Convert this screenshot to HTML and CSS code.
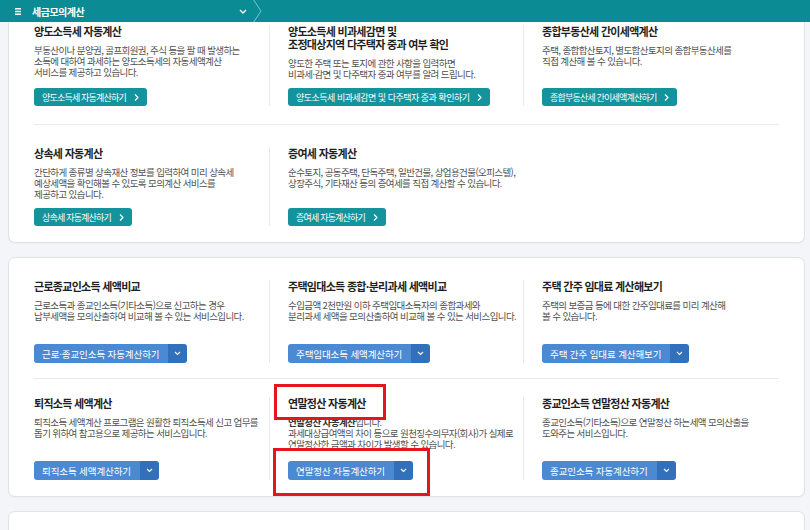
FILE: index.html
```html
<!DOCTYPE html>
<html lang="ko">
<head>
    <meta charset="UTF-8">
    <meta name="viewport" content="width=device-width, initial-scale=1.0">
    <title>세금모의계산</title>
    <link rel="stylesheet" href="styles.css">
</head>
<body>
    <header class="topbar">
        <div class="menu">
            <svg class="hamburger" width="6" height="7" viewBox="0 0 6 7"><path d="M0 .75h6M0 3.5h6M0 6.25h6" stroke="#fff" stroke-width="1.3"/></svg>
            <span class="menu-title">세금모의계산</span>
            <svg class="menu-caret" width="8" height="5" viewBox="0 0 8 5"><path d="M1 1l3 3 3-3" fill="none" stroke="#fff" stroke-width="1.4"/></svg>
        </div>
        <svg class="crumb-sep" width="9" height="22" viewBox="0 0 9 22"><path d="M0 -1l8 12-8 12" fill="none" stroke="#7fc3c8" stroke-width="1"/></svg>
    </header>

    <main class="page">
        <!-- 양도 / 상속 / 증여 -->
        <section class="card card-first">
            <div class="row row-a">
                <div class="cell">
                    <h3 class="title">양도소득세 자동계산</h3>
                    <p class="desc">부동산이나 분양권, 골프회원권, 주식 등을 팔 때 발생하는<br>소득에 대하여 과세하는 양도소득세의 자동세액계산<br>서비스를 제공하고 있습니다.</p>
                    <a href="#" class="btn-teal">양도소득세 자동계산하기<svg width="5" height="7" viewBox="0 0 5 7"><path d="M1 .5l3 3-3 3" fill="none" stroke="#fff" stroke-width="1.1"/></svg></a>
                </div>
                <div class="cell">
                    <h3 class="title">양도소득세 비과세감면 및<br>조정대상지역 다주택자 중과 여부 확인</h3>
                    <p class="desc">양도한 주택 또는 토지에 관한 사항을 입력하면<br>비과세·감면 및 다주택자 중과 여부를 알려 드립니다.</p>
                    <a href="#" class="btn-teal btn-wide">양도소득세 비과세감면 및 다주택자 중과 확인하기<svg width="5" height="7" viewBox="0 0 5 7"><path d="M1 .5l3 3-3 3" fill="none" stroke="#fff" stroke-width="1.1"/></svg></a>
                </div>
                <div class="cell">
                    <h3 class="title">종합부동산세 간이세액계산</h3>
                    <p class="desc">주택, 종합합산토지, 별도합산토지의 종합부동산세를<br>직접 계산해 볼 수 있습니다.</p>
                    <a href="#" class="btn-teal">종합부동산세 간이세액계산하기<svg width="5" height="7" viewBox="0 0 5 7"><path d="M1 .5l3 3-3 3" fill="none" stroke="#fff" stroke-width="1.1"/></svg></a>
                </div>
            </div>
            <div class="row row-b">
                <div class="cell">
                    <h3 class="title">상속세 자동계산</h3>
                    <p class="desc">간단하게 종류별 상속재산 정보를 입력하여 미리 상속세<br>예상세액을 확인해볼 수 있도록 모의계산 서비스를<br>제공하고 있습니다.</p>
                    <a href="#" class="btn-teal">상속세 자동계산하기<svg width="5" height="7" viewBox="0 0 5 7"><path d="M1 .5l3 3-3 3" fill="none" stroke="#fff" stroke-width="1.1"/></svg></a>
                </div>
                <div class="cell no-line">
                    <h3 class="title">증여세 자동계산</h3>
                    <p class="desc">순수토지, 공동주택, 단독주택, 일반건물, 상업용건물(오피스텔),<br>상장주식, 기타재산 등의 증여세를 직접 계산할 수 있습니다.</p>
                    <a href="#" class="btn-teal">증여세 자동계산하기<svg width="5" height="7" viewBox="0 0 5 7"><path d="M1 .5l3 3-3 3" fill="none" stroke="#fff" stroke-width="1.1"/></svg></a>
                </div>
                <div class="cell"></div>
            </div>
        </section>

        <!-- 소득세 계열 -->
        <section class="card card-income">
            <div class="row row-c">
                <div class="cell">
                    <h3 class="title">근로종교인소득 세액비교</h3>
                    <p class="desc">근로소득과 종교인소득(기타소득)으로 신고하는 경우<br>납부세액을 모의산출하여 비교해 볼 수 있는 서비스입니다.</p>
                    <div class="btn-split">
                        <a href="#" class="btn-main">근로·종교인소득 자동계산하기</a>
                        <span class="btn-toggle"><svg width="7" height="5" viewBox="0 0 7 5"><path d="M1 1l2.5 2.5L6 1" fill="none" stroke="#fff" stroke-width="1.1"/></svg></span>
                    </div>
                </div>
                <div class="cell">
                    <h3 class="title">주택임대소득 종합·분리과세 세액비교</h3>
                    <p class="desc">수입금액 2천만원 이하 주택임대소득자의 종합과세와<br>분리과세 세액을 모의산출하여 비교해 볼 수 있는 서비스입니다.</p>
                    <div class="btn-split">
                        <a href="#" class="btn-main">주택임대소득 세액계산하기</a>
                        <span class="btn-toggle"><svg width="7" height="5" viewBox="0 0 7 5"><path d="M1 1l2.5 2.5L6 1" fill="none" stroke="#fff" stroke-width="1.1"/></svg></span>
                    </div>
                </div>
                <div class="cell">
                    <h3 class="title">주택 간주 임대료 계산해보기</h3>
                    <p class="desc">주택의 보증금 등에 대한 간주임대료를 미리 계산해<br>볼 수 있습니다.</p>
                    <div class="btn-split">
                        <a href="#" class="btn-main">주택 간주 임대료 계산해보기</a>
                        <span class="btn-toggle"><svg width="7" height="5" viewBox="0 0 7 5"><path d="M1 1l2.5 2.5L6 1" fill="none" stroke="#fff" stroke-width="1.1"/></svg></span>
                    </div>
                </div>
            </div>
            <div class="row row-d">
                <div class="cell">
                    <h3 class="title">퇴직소득 세액계산</h3>
                    <p class="desc">퇴직소득 세액계산 프로그램은 원활한 퇴직소득세 신고 업무를<br>돕기 위하여 참고용으로 제공하는 서비스입니다.</p>
                    <div class="btn-split">
                        <a href="#" class="btn-main">퇴직소득 세액계산하기</a>
                        <span class="btn-toggle"><svg width="7" height="5" viewBox="0 0 7 5"><path d="M1 1l2.5 2.5L6 1" fill="none" stroke="#fff" stroke-width="1.1"/></svg></span>
                    </div>
                </div>
                <div class="cell marked">
                    <h3 class="title">연말정산 자동계산</h3>
                    <p class="desc"><strong>연말정산 자동계산</strong>입니다.<br>과세대상급여액의 차이 등으로 원천징수의무자(회사)가 실제로<br>연말정산한 금액과 차이가 발생할 수 있습니다.</p>
                    <div class="btn-split">
                        <a href="#" class="btn-main">연말정산 자동계산하기</a>
                        <span class="btn-toggle"><svg width="7" height="5" viewBox="0 0 7 5"><path d="M1 1l2.5 2.5L6 1" fill="none" stroke="#fff" stroke-width="1.1"/></svg></span>
                    </div>
                    <span class="highlight hl-title"></span>
                    <span class="highlight hl-button"></span>
                </div>
                <div class="cell">
                    <h3 class="title">종교인소득 연말정산 자동계산</h3>
                    <p class="desc">종교인소득(기타소득)으로 연말정산 하는세액 모의산출을<br>도와주는 서비스입니다.</p>
                    <div class="btn-split">
                        <a href="#" class="btn-main">종교인소득 자동계산하기</a>
                        <span class="btn-toggle"><svg width="7" height="5" viewBox="0 0 7 5"><path d="M1 1l2.5 2.5L6 1" fill="none" stroke="#fff" stroke-width="1.1"/></svg></span>
                    </div>
                </div>
            </div>
        </section>

        <section class="card card-last"></section>
    </main>
</body>
</html>
```

FILE: styles.css
```css
/* General Styles */
* {
    box-sizing: border-box;
}

body {
    margin: 0;
    padding: 0;
    font-family: "Noto Sans CJK KR", "Noto Sans", sans-serif;
    background-color: #f3f5f8;
    color: #222;
    overflow: hidden;
}

/* Top bar */
.topbar {
    display: flex;
    align-items: center;
    height: 22px;
    background-color: #0b8b94;
}

.menu {
    display: flex;
    align-items: center;
    width: 253px;
    height: 100%;
    padding-left: 15px;
}

.hamburger {
    margin-right: 11px;
}

.menu-title {
    color: #ffffff;
    font-size: 10px;
    font-weight: bold;
    letter-spacing: -0.5px;
}

.menu-caret {
    margin-left: auto;
    margin-right: 6px;
}

.crumb-sep {
    display: block;
}

/* Cards */
.page {
    display: flex;
    flex-direction: column;
    gap: 14px;
    padding: 0 5px 0 8px;
}

.card {
    background: #ffffff;
    border: 1px solid #dfe4ea;
    border-radius: 7px;
    padding: 0 25px;
    box-shadow: 0 1px 1px rgba(0, 0, 0, 0.03);
}

.card-first {
    border-top: none;
    border-radius: 0 0 7px 7px;
}

.card-income .cell {
    min-height: 83px;
}

.card-last {
    height: 40px;
}

.row {
    display: grid;
    grid-template-columns: 236px 254px 1fr;
}

.row + .row {
    border-top: 1px solid #e8ebef;
}

.row-a {
    padding: 3px 0 18px;
}

.row-b {
    padding: 22px 0 16px;
}

.row-c {
    padding: 22px 0 15px;
}

.row-d {
    padding: 18px 0 16px;
}

.cell {
    display: flex;
    flex-direction: column;
    align-items: flex-start;
    border-right: 1px solid #e6e9ed;
}

.cell + .cell {
    padding-left: 18px;
}

.cell:last-child,
.cell.no-line {
    border-right: none;
}

.title {
    margin: 0 0 7px;
    font-size: 11px;
    line-height: 13px;
    font-weight: bold;
    letter-spacing: -0.7px;
    color: #1f1f1f;
}

.desc {
    margin: 0 0 8px;
    font-size: 9.5px;
    line-height: 11px;
    letter-spacing: -0.6px;
    color: #505050;
    white-space: nowrap;
}

.desc strong {
    color: #333;
}

/* Buttons */
.btn-teal {
    display: inline-flex;
    align-items: center;
    gap: 8px;
    height: 18px;
    margin-top: auto;
    padding: 0 8px;
    background-color: #14939d;
    border-radius: 3px;
    color: #ffffff;
    font-size: 9px;
    letter-spacing: -0.8px;
    text-decoration: none;
    white-space: nowrap;
}

.btn-wide {
    letter-spacing: -0.5px;
}

.btn-split {
    display: inline-flex;
    height: 19px;
    margin-top: auto;
    border-radius: 3px;
    overflow: hidden;
}

.btn-main {
    display: flex;
    align-items: center;
    padding: 0 9px 0 8px;
    background-color: #4b8ad3;
    color: #ffffff;
    font-size: 9.5px;
    letter-spacing: -0.1px;
    text-decoration: none;
    white-space: nowrap;
}

.btn-toggle {
    display: flex;
    align-items: center;
    justify-content: center;
    width: 19px;
    background-color: #3270bb;
}

/* Red annotation boxes */
.marked {
    position: relative;
}

.highlight {
    position: absolute;
    border: 3px solid #e3151d;
}

.hl-title {
    left: 4px;
    top: -13px;
    width: 112px;
    height: 36px;
}

.hl-button {
    left: 3px;
    top: 51px;
    width: 157px;
    height: 48px;
}
```
